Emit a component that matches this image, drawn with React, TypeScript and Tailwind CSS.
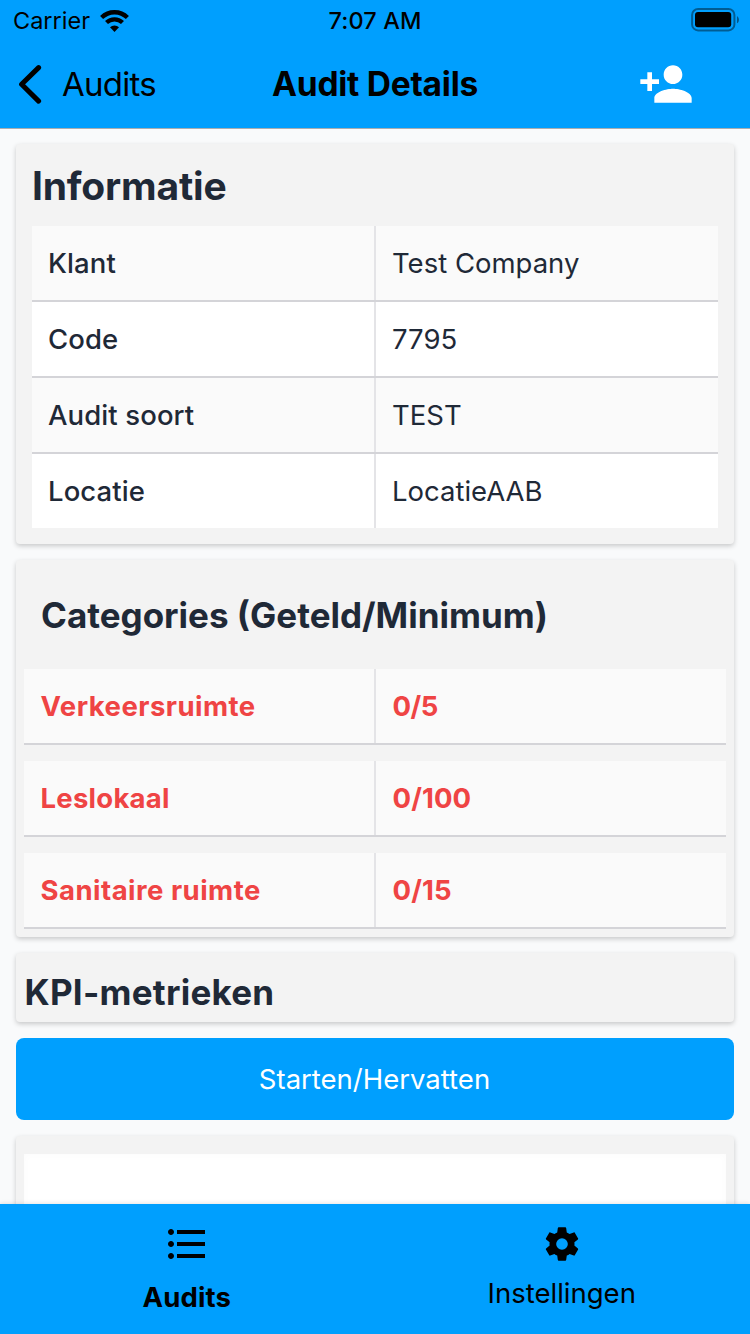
import type { ReactNode } from "react";
import { MdFormatListBulleted, MdPersonAdd } from "react-icons/md";

const info = [
  { label: "Klant", value: "Test Company" },
  { label: "Code", value: "7795" },
  { label: "Audit soort", value: "TEST" },
  { label: "Locatie", value: "LocatieAAB" },
];

const categories = [
  { label: "Verkeersruimte", value: "0/5", tracking: "tracking-[0.46px]", valueTracking: "tracking-[-0.5px]" },
  { label: "Leslokaal", value: "0/100", tracking: "tracking-[0.25px]", valueTracking: "tracking-[0.1px]" },
  { label: "Sanitaire ruimte", value: "0/15", tracking: "tracking-[0.48px]", valueTracking: "tracking-[0.15px]" },
];

function CogIcon() {
  return (
    <svg width="40" height="40" viewBox="0 0 24 24" fill="currentColor">
      <path d="M12,15.5A3.5,3.5 0 0,1 8.5,12A3.5,3.5 0 0,1 12,8.5A3.5,3.5 0 0,1 15.5,12A3.5,3.5 0 0,1 12,15.5M19.43,12.97C19.47,12.65 19.5,12.33 19.5,12C19.5,11.67 19.47,11.34 19.43,11L21.54,9.37C21.73,9.22 21.78,8.95 21.66,8.73L19.66,5.27C19.54,5.05 19.27,4.96 19.05,5.05L16.56,6.05C16.04,5.66 15.5,5.32 14.87,5.07L14.5,2.42C14.46,2.18 14.25,2 14,2H10C9.75,2 9.54,2.18 9.5,2.42L9.13,5.07C8.5,5.32 7.96,5.66 7.44,6.05L4.95,5.05C4.73,4.96 4.46,5.05 4.34,5.27L2.34,8.73C2.21,8.95 2.27,9.22 2.46,9.37L4.57,11C4.53,11.34 4.5,11.67 4.5,12C4.5,12.33 4.53,12.65 4.57,12.97L2.46,14.63C2.27,14.78 2.21,15.05 2.34,15.27L4.34,18.73C4.46,18.95 4.73,19.03 4.95,18.95L7.44,17.94C7.96,18.34 8.5,18.68 9.13,18.93L9.5,21.58C9.54,21.82 9.75,22 10,22H14C14.25,22 14.46,21.82 14.5,21.58L14.87,18.93C15.5,18.67 16.04,18.34 16.56,17.94L19.05,18.95C19.27,19.03 19.54,18.95 19.66,18.73L21.66,15.27C21.78,15.05 21.73,14.78 21.54,14.63L19.43,12.97Z" />
    </svg>
  );
}

function Card({ className, children }: { className: string; children?: ReactNode }) {
  return (
    <section
      className={`shrink-0 rounded-[4px] bg-[#f3f3f3] shadow-[0_2px_5px_rgba(0,0,0,0.2)] ${className}`}
    >
      {children}
    </section>
  );
}

function StatusBar() {
  return (
    <div className="grid h-10 grid-cols-3 items-center text-[23.5px] leading-[41px]">
      <div className="flex items-center pl-[13px]">
        <span>Carrier</span>
        <svg className="ml-[9px]" width="31" height="24" viewBox="0 0 31 24">
          <path d="M2.6 8.6a18.2 18.2 0 0 1 25.8 0" fill="none" stroke="#000" strokeWidth="4.3" />
          <path d="M7.5 13.6a11.3 11.3 0 0 1 16 0" fill="none" stroke="#000" strokeWidth="4.2" />
          <path d="M15.5 22.9l-4.5-4.6a6.4 6.4 0 0 1 9 0z" />
        </svg>
      </div>
      <div className="text-center font-medium tracking-[0.1px]">7:07 AM</div>
      <div className="flex justify-end pr-[10px]">
        <svg className="-mt-px" width="49" height="24" viewBox="0 0 49 24">
          <rect x="1.1" y="1" width="42.3" height="21.4" rx="6" fill="none" stroke="#000" strokeOpacity="0.42" strokeWidth="2" />
          <rect x="4" y="4" width="36.2" height="15.2" rx="3" />
          <path d="M46 8.2c2.6 1 2.6 6 0 7z" fillOpacity="0.45" />
        </svg>
      </div>
    </div>
  );
}

function NavBar() {
  return (
    <div className="grid h-[88px] grid-cols-3 items-center text-[33.5px] leading-[40px]">
      <div className="flex items-center pl-4">
        <svg width="26" height="42" viewBox="0 0 26 42">
          <path d="M22.6 4.6L5.6 21.3l17 16.8" fill="none" stroke="#000" strokeWidth="5" strokeLinecap="round" strokeLinejoin="round" />
        </svg>
        <span className="pl-5 text-[33px] tracking-[-0.75px]">Audits</span>
      </div>
      <h1 className="text-center font-bold tracking-[-0.25px] whitespace-nowrap">Audit Details</h1>
      <div className="flex justify-end pr-[56px]">
        <MdPersonAdd className="text-white" size={56} />
      </div>
    </div>
  );
}

export default function App() {
  return (
    <div className="flex h-[1334px] w-[750px] flex-col overflow-hidden bg-[#f9fafb] font-['Inter','Liberation_Sans',sans-serif] text-[#1f2937]">
      <header className="h-[129px] shrink-0 border-b border-[#a9adb1] bg-[#009ffe] text-black">
        <StatusBar />
        <NavBar />
      </header>

      <main className="flex min-h-0 flex-1 flex-col gap-4 overflow-hidden px-4 pt-[15px]">
        <Card className="h-[400px] px-4">
          <h2 className="text-[39px] leading-[84px] font-bold tracking-[-0.18px]">Informatie</h2>
          <dl className="-mt-[2px]">
            {info.map((row) => (
              <div
                key={row.label}
                className="flex border-b-2 border-[#d4d4d8] text-[27.5px] leading-[74px] odd:bg-[#fafafa] even:bg-white last:border-b-0"
              >
                <dt className="w-[344px] border-r-2 border-[#e4e4e7] pl-4 font-medium tracking-[0.1px]">{row.label}</dt>
                <dd className="flex-1 pl-4">{row.value}</dd>
              </div>
            ))}
          </dl>
        </Card>

        <Card className="h-[377px] px-2">
          <h2 className="h-[109px] pl-[17px] text-[35px] leading-[111px] font-bold">Categories (Geteld/Minimum)</h2>
          <dl className="flex flex-col gap-4">
            {categories.map((row) => (
              <div
                key={row.label}
                className="flex border-b-2 border-[#d4d4d8] bg-[#fafafa] text-[27.5px] leading-[74px] font-bold text-[#ef4444]"
              >
                <dt className={`w-[352px] border-r-2 border-[#e4e4e7] pl-[16.5px] ${row.tracking}`}>{row.label}</dt>
                <dd className={`flex-1 pl-[16.5px] ${row.valueTracking}`}>{row.value}</dd>
              </div>
            ))}
          </dl>
        </Card>

        <Card className="h-[69px] px-2">
          <h2 className="pl-[0.5px] text-[35px] leading-[79px] font-bold tracking-[0.25px]">KPI-metrieken</h2>
        </Card>

        <button className="h-[82px] shrink-0 rounded-lg bg-[#009ffe] pr-px text-[27.5px] leading-[82px] text-white">
          Starten/Hervatten
        </button>

        <Card className="h-[200px] px-2 pt-[18px]">
          <div className="h-full bg-white shadow-[inset_0_0_8px_rgba(0,0,0,0.02)]" />
        </Card>
      </main>

      <nav className="z-10 grid h-[130px] shrink-0 grid-cols-2 bg-[#009ffe] pr-px text-[27.5px] leading-[34px] text-black shadow-[0_-1px_4px_rgba(0,0,0,0.1)]">
        <a className="flex flex-col items-center pt-4 pr-px font-bold">
          <MdFormatListBulleted size={48} />
          <span className="mt-3 tracking-[0.14px]">Audits</span>
        </a>
        <a className="flex flex-col items-center pt-5">
          <CogIcon />
          <span className="mt-3">Instellingen</span>
        </a>
      </nav>
    </div>
  );
}
